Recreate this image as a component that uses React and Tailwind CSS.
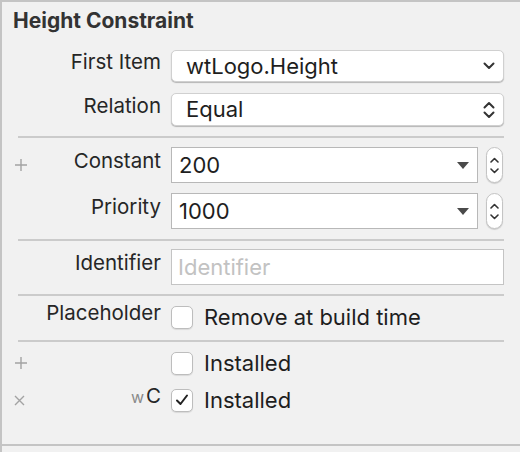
import React from "react";

const FONT = { fontFamily: "Inter, 'Liberation Sans', sans-serif" };

function ChevDown({ className = "" }) {
  return (
    <svg width="12" height="8" viewBox="0 0 12 8" className={className}>
      <path d="M1.5 1.5 L6 6 L10.5 1.5" fill="none" stroke="#333" strokeWidth="2" strokeLinecap="round" strokeLinejoin="round" />
    </svg>
  );
}

function ChevUpDown() {
  return (
    <svg width="12" height="18" viewBox="0 0 12 18">
      <path d="M1.5 6.5 L6 2 L10.5 6.5" fill="none" stroke="#333" strokeWidth="2" strokeLinecap="round" strokeLinejoin="round" />
      <path d="M1.5 11.5 L6 16 L10.5 11.5" fill="none" stroke="#333" strokeWidth="2" strokeLinecap="round" strokeLinejoin="round" />
    </svg>
  );
}

function Stepper() {
  return (
    <div className="ml-[8px] w-[17px] h-[36px] rounded-full bg-white border border-[#c4c4c4] shadow-[0_1px_1px_rgba(0,0,0,0.15)] flex flex-col items-center justify-center gap-[5px]">
      <svg width="9" height="6" viewBox="0 0 9 6">
        <path d="M1 5 L4.5 1.5 L8 5" fill="none" stroke="#333" strokeWidth="1.6" strokeLinecap="round" strokeLinejoin="round" />
      </svg>
      <svg width="9" height="6" viewBox="0 0 9 6">
        <path d="M1 1 L4.5 4.5 L8 1" fill="none" stroke="#333" strokeWidth="1.6" strokeLinecap="round" strokeLinejoin="round" />
      </svg>
    </div>
  );
}

function Triangle() {
  return (
    <svg width="12" height="7" viewBox="0 0 12 7">
      <path d="M0 0 L12 0 L6 7 Z" fill="#4a4a4a" />
    </svg>
  );
}

function Check({ checked }) {
  return (
    <div className="w-[22px] h-[23px] rounded-[5px] bg-white border border-[#bdbdbd] shadow-[0_1px_1px_rgba(0,0,0,0.1)] flex items-center justify-center">
      {checked && (
        <svg width="14" height="12" viewBox="0 0 14 12">
          <path d="M2 6.5 L5.5 10 L12 1.5" fill="none" stroke="#222" strokeWidth="2" strokeLinecap="round" strokeLinejoin="round" />
        </svg>
      )}
    </div>
  );
}

function Plus() {
  return (
    <svg width="14" height="14" viewBox="0 0 14 14">
      <path d="M7 1 V13 M1 7 H13" stroke="#a3a3a3" strokeWidth="1.4" />
    </svg>
  );
}

function Cross() {
  return (
    <svg width="11" height="11" viewBox="0 0 11 11">
      <path d="M1 1 L10 10 M10 1 L1 10" stroke="#a3a3a3" strokeWidth="1.4" />
    </svg>
  );
}

function Row({ icon, label, children, className = "" }) {
  return (
    <div className={"flex items-center " + className}>
      <div className="w-[159px] flex items-center justify-between">
        <div className="pl-[12px] w-[30px] flex items-center">{icon}</div>
        <div className="text-[20.5px] text-[#262626] leading-none text-right pb-[7px]">{label}</div>
      </div>
      <div className="ml-[10px] flex items-center flex-1 h-full">{children}</div>
    </div>
  );
}

function Sep({ className = "" }) {
  return <div className={"ml-[16px] w-[486px] h-[2px] bg-[#cbcbcb] " + className} />;
}

export default function App() {
  return (
    <div
      style={FONT}
      className="w-[520px] h-[452px] bg-[#f1f1f1] border-t-2 border-l-2 border-[#c4c4c4] flex flex-col overflow-hidden"
    >
      <div className="h-[48px] pl-[11px] pt-[7px] text-[21px] font-bold text-[#333] leading-[24px]">
        Height Constraint
      </div>

      <Row label="First Item" className="h-[32px]">
        <div className="w-[333px] h-[32px] bg-white rounded-[5px] border border-[#d0d0d0] shadow-[0_1px_1px_rgba(0,0,0,0.25)] flex items-center justify-between pl-[14px] pr-[8px]">
          <span className="text-[22px] text-[#1e1e1e]">wtLogo.Height</span>
          <ChevDown />
        </div>
      </Row>

      <Row label="Relation" className="mt-[11px] h-[33px]">
        <div className="w-[333px] h-[33px] bg-white rounded-[5px] border border-[#d0d0d0] shadow-[0_1px_1px_rgba(0,0,0,0.25)] flex items-center justify-between pl-[14px] pr-[8px]">
          <span className="text-[22px] text-[#1e1e1e]">Equal</span>
          <ChevUpDown />
        </div>
      </Row>

      <Sep className="mt-[10px]" />

      <Row icon={<Plus />} label="Constant" className="mt-[9px] h-[36px]">
        <div className="w-[307px] h-[36px] bg-white border border-[#b8b8b8] flex items-center justify-between pl-[7px] pr-[8px]">
          <span className="text-[22px] text-[#1e1e1e]">200</span>
          <Triangle />
        </div>
        <Stepper />
      </Row>

      <Row label="Priority" className="mt-[10px] h-[36px]">
        <div className="w-[307px] h-[36px] bg-white border border-[#b8b8b8] flex items-center justify-between pl-[7px] pr-[8px]">
          <span className="text-[22px] text-[#1e1e1e]">1000</span>
          <Triangle />
        </div>
        <Stepper />
      </Row>

      <Sep className="mt-[10px]" />

      <Row label="Identifier" className="mt-[8px] h-[36px]">
        <div className="w-[333px] h-[36px] bg-white border border-[#c4c4c4] flex items-center pl-[6px]">
          <span className="text-[22px] text-[#c2c2c2]">Identifier</span>
        </div>
      </Row>

      <Sep className="mt-[9px]" />

      <Row label="Placeholder" className="mt-[9px] h-[24px]">
        <Check />
        <span className="ml-[11px] text-[22px] text-[#1e1e1e]">Remove at build time</span>
      </Row>

      <Sep className="mt-[11px]" />

      <Row icon={<Plus />} label="" className="mt-[9px] h-[24px]">
        <Check />
        <span className="ml-[11px] text-[22px] text-[#1e1e1e]">Installed</span>
      </Row>

      <Row
        icon={<Cross />}
        label={
          <span>
            <span className="text-[16px] text-[#8a8a8a] mr-[2px]">w</span>
            <span>C</span>
          </span>
        }
        className="mt-[13px] h-[24px]"
      >
        <Check checked />
        <span className="ml-[11px] text-[22px] text-[#1e1e1e]">Installed</span>
      </Row>

      <div className="mt-[32px] h-[2px] w-full bg-[#c4c4c4]" />
    </div>
  );
}
